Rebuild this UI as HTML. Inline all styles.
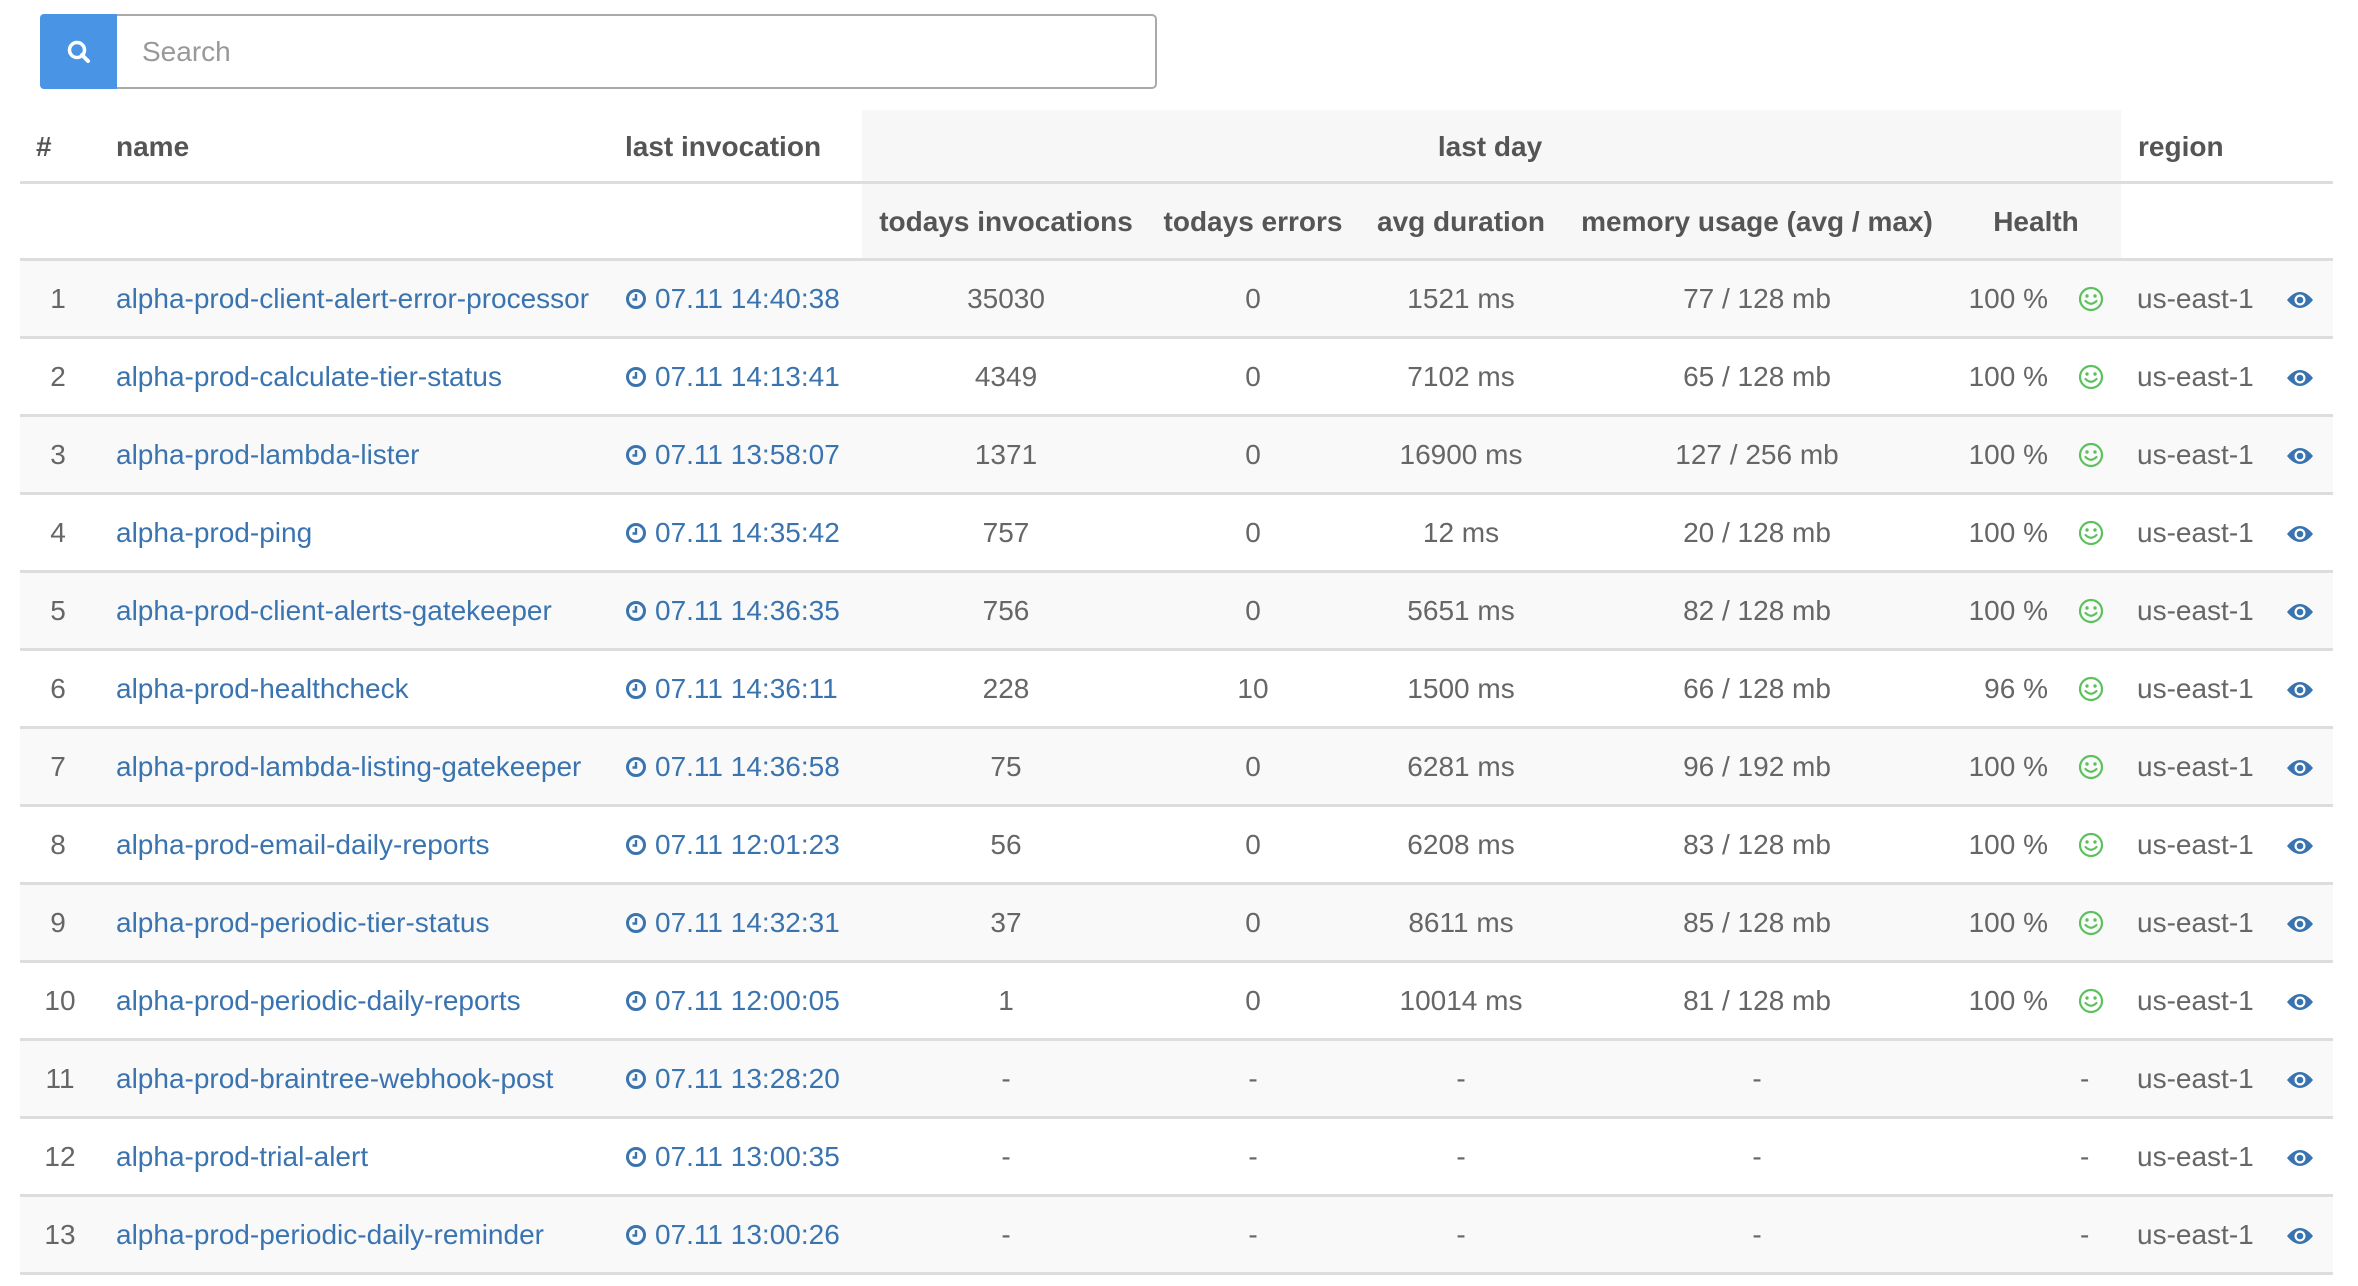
<!DOCTYPE html>
<html><head><meta charset="utf-8"><style>
*{margin:0;padding:0;box-sizing:border-box}
body{width:2358px;height:1286px;background:#fff;font-family:"Liberation Sans",Arial,sans-serif;font-size:28px;color:#666;position:relative;overflow:hidden}
.abs{position:absolute;white-space:nowrap}
.row{position:absolute;left:20px;width:2313px;height:78px;border-bottom:3px solid #ddd}
.odd{background:#f9f9f9}
.c{position:absolute;top:0;height:75px;line-height:75px;white-space:nowrap}
.ctr{transform:translateX(-50%)}
a{color:#3a74b0;text-decoration:none}
.h{font-weight:bold;color:#555;position:absolute;white-space:nowrap}
</style></head><body>
<div class="abs" style="left:40px;top:14px;width:77px;height:75px;background:#4a94e6;border-radius:4px 0 0 4px"></div>
<svg class="abs" style="left:66px;top:39px" width="26" height="26" viewBox="0 0 26 26"><circle cx="11" cy="11" r="7.5" fill="none" stroke="#fff" stroke-width="3.5"/><line x1="16" y1="16" x2="22" y2="22" stroke="#fff" stroke-width="4" stroke-linecap="round"/></svg>
<div class="abs" style="left:117px;top:14px;width:1040px;height:75px;border:2px solid #aaa;border-left:none;border-radius:0 5px 5px 0"></div>
<div class="abs" style="left:142px;top:14px;line-height:75px;color:#999">Search</div>

<div class="abs" style="left:862px;top:110px;width:1259px;height:150px;background:#f7f7f7"></div>
<div class="abs" style="left:20px;top:181px;width:2313px;height:3px;background:#ddd"></div>
<div class="abs" style="left:20px;top:258px;width:2313px;height:3px;background:#ddd"></div>
<div class="h" style="left:36px;top:131px">#</div>
<div class="h" style="left:116px;top:131px">name</div>
<div class="h" style="left:625px;top:131px">last invocation</div>
<div class="h ctr" style="left:1490px;top:131px">last day</div>
<div class="h" style="left:2138px;top:131px">region</div>
<div class="h ctr" style="left:1006px;top:206px">todays invocations</div>
<div class="h ctr" style="left:1253px;top:206px">todays errors</div>
<div class="h ctr" style="left:1461px;top:206px">avg duration</div>
<div class="h ctr" style="left:1757px;top:206px">memory usage (avg / max)</div>
<div class="h ctr" style="left:2036px;top:206px">Health</div>

<div id="rows"></div>
<script>
(function(){
var d=[
["alpha-prod-client-alert-error-processor","07.11 14:40:38","35030","0","1521 ms","77 / 128 mb","100 %"],
["alpha-prod-calculate-tier-status","07.11 14:13:41","4349","0","7102 ms","65 / 128 mb","100 %"],
["alpha-prod-lambda-lister","07.11 13:58:07","1371","0","16900 ms","127 / 256 mb","100 %"],
["alpha-prod-ping","07.11 14:35:42","757","0","12 ms","20 / 128 mb","100 %"],
["alpha-prod-client-alerts-gatekeeper","07.11 14:36:35","756","0","5651 ms","82 / 128 mb","100 %"],
["alpha-prod-healthcheck","07.11 14:36:11","228","10","1500 ms","66 / 128 mb","96 %"],
["alpha-prod-lambda-listing-gatekeeper","07.11 14:36:58","75","0","6281 ms","96 / 192 mb","100 %"],
["alpha-prod-email-daily-reports","07.11 12:01:23","56","0","6208 ms","83 / 128 mb","100 %"],
["alpha-prod-periodic-tier-status","07.11 14:32:31","37","0","8611 ms","85 / 128 mb","100 %"],
["alpha-prod-periodic-daily-reports","07.11 12:00:05","1","0","10014 ms","81 / 128 mb","100 %"],
["alpha-prod-braintree-webhook-post","07.11 13:28:20","-","-","-","-",null],
["alpha-prod-trial-alert","07.11 13:00:35","-","-","-","-",null],
["alpha-prod-periodic-daily-reminder","07.11 13:00:26","-","-","-","-",null]];
var clock='<svg width="22" height="22" viewBox="0 0 22 22" style="vertical-align:-2px;margin-right:8px"><circle cx="11" cy="11" r="8.5" fill="none" stroke="#3a74b0" stroke-width="3"/><path d="M11 6v5.5H7.5" fill="none" stroke="#3a74b0" stroke-width="2.4"/></svg>';
var smile='<svg width="26" height="26" viewBox="0 0 26 26" style="vertical-align:-4px"><circle cx="13" cy="13" r="11" fill="none" stroke="#5cc15c" stroke-width="2.2"/><circle cx="9" cy="10" r="1.7" fill="#5cc15c"/><circle cx="17" cy="10" r="1.7" fill="#5cc15c"/><path d="M7.5 15q5.5 5.5 11 0" fill="none" stroke="#5cc15c" stroke-width="2.2" stroke-linecap="round"/></svg>';
var eye='<svg width="28" height="20" viewBox="0 0 28 20" style="vertical-align:-2px"><path d="M1 10Q14 -6 27 10Q14 26 1 10Z" fill="#3a74b0"/><circle cx="14" cy="10" r="5.5" fill="#fff"/><circle cx="14" cy="10" r="3.3" fill="#3a74b0"/></svg>';
var h='';
for(var i=0;i<d.length;i++){var r=d[i],ty=261+i*78;
h+='<div class="row'+(i%2==0?' odd':'')+'" style="top:'+ty+'px">'+
'<div class="c ctr" style="left:'+(i<9?38:40)+'px">'+(i+1)+'</div>'+
'<div class="c" style="left:96px"><a>'+r[0]+'</a></div>'+
'<div class="c" style="left:605px"><a>'+clock+r[1]+'</a></div>'+
'<div class="c ctr" style="left:986px">'+r[2]+'</div>'+
'<div class="c ctr" style="left:1233px">'+r[3]+'</div>'+
'<div class="c ctr" style="left:1441px">'+r[4]+'</div>'+
'<div class="c ctr" style="left:1737px">'+r[5]+'</div>'+
(r[6]?'<div class="c" style="right:285px">'+r[6]+'</div><div class="c" style="left:2058px">'+smile+'</div>':'<div class="c" style="left:2060px">-</div>')+
'<div class="c" style="left:2117px">us-east-1</div>'+
'<div class="c" style="left:2266px">'+eye+'</div></div>';}
document.getElementById('rows').innerHTML=h;
})();
</script>
</body></html>
